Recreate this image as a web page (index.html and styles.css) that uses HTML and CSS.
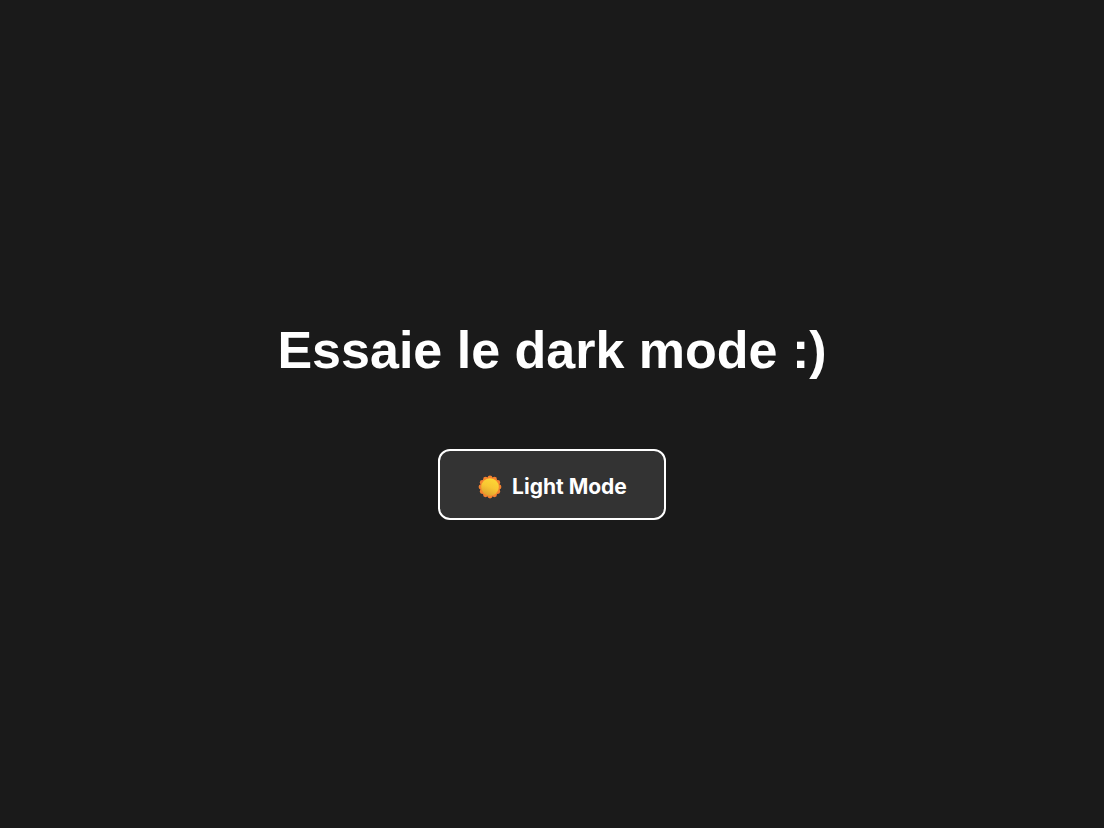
FILE: index.html
```html
<!DOCTYPE html>
<html lang="fr" data-theme="dark">
<head>
    <meta charset="UTF-8">
    <meta name="viewport" content="width=device-width, initial-scale=1.0">
    <title>Dark mode</title>
    <link rel="stylesheet" href="styles.css">
</head>
<body>
    <main class="container">
        <h1 class="title">Essaie le dark mode :)</h1>
        <button type="button" class="theme-toggle">
            <svg class="theme-icon" viewBox="0 0 24 24" aria-hidden="true">
                <defs>
                    <linearGradient id="sun-face" x1="0.7" y1="0" x2="0.3" y2="1">
                        <stop offset="0" stop-color="#fdd835"/>
                        <stop offset="0.5" stop-color="#f8c633"/>
                        <stop offset="1" stop-color="#dd9f2e"/>
                    </linearGradient>
                </defs>
                <!-- Rays -->
                <g fill="#f5822f">
                    <circle cx="12" cy="12" r="10"/>
                    <circle cx="12" cy="3" r="2.4"/>
                    <circle cx="16.5" cy="4.2" r="2.4"/>
                    <circle cx="19.8" cy="7.5" r="2.4"/>
                    <circle cx="21" cy="12" r="2.4"/>
                    <circle cx="19.8" cy="16.5" r="2.4"/>
                    <circle cx="16.5" cy="19.8" r="2.4"/>
                    <circle cx="12" cy="21" r="2.4"/>
                    <circle cx="7.5" cy="19.8" r="2.4"/>
                    <circle cx="4.2" cy="16.5" r="2.4"/>
                    <circle cx="3" cy="12" r="2.4"/>
                    <circle cx="4.2" cy="7.5" r="2.4"/>
                    <circle cx="7.5" cy="4.2" r="2.4"/>
                </g>
                <circle cx="12" cy="12" r="8.8" fill="url(#sun-face)"/>
            </svg>
            <span class="theme-text">Light Mode</span>
        </button>
    </main>
    <script>
        // Theme toggle functionality
        const toggle = document.querySelector('.theme-toggle');
        toggle.addEventListener('click', function() {
            const html = document.documentElement;
            const newTheme = html.getAttribute('data-theme') === 'dark' ? 'light' : 'dark';
            html.setAttribute('data-theme', newTheme);
            document.querySelector('.theme-text').textContent = newTheme === 'dark' ? 'Light Mode' : 'Dark Mode';
        });
    </script>
</body>
</html>
```

FILE: styles.css
```css
/* Theme Variables */
[data-theme="light"] {
    --bg-primary: #ffffff;
    --text-primary: #1a1a1a;
    --button-bg: #f0f0f0;
}

[data-theme="dark"] {
    --bg-primary: #1a1a1a;
    --text-primary: #ffffff;
    --button-bg: #333333;
}

* {
    box-sizing: border-box;
}

body {
    margin: 0;
    background-color: var(--bg-primary);
    color: var(--text-primary);
    font-family: "Liberation Sans", Arial, sans-serif;
}

.container {
    display: flex;
    flex-direction: column;
    align-items: center;
    justify-content: center;
    gap: 69px;
    min-height: 100vh;
    padding: 32px 20px 20px;
}

.title {
    margin: 0;
    font-size: 52px;
    line-height: 60px;
    text-align: center;
}

/* Theme Toggle Button */
.theme-toggle {
    display: flex;
    align-items: center;
    gap: 10px;
    padding: 22px 37px 18px 38px;
    border: 2px solid var(--text-primary);
    border-radius: 12px;
    background-color: var(--button-bg);
    color: var(--text-primary);
    font-family: Inter, "Open Sans", sans-serif;
    font-size: 21px;
    font-weight: 700;
    line-height: 27px;
    cursor: pointer;
}

.theme-icon {
    width: 24px;
    height: 24px;
}
```
